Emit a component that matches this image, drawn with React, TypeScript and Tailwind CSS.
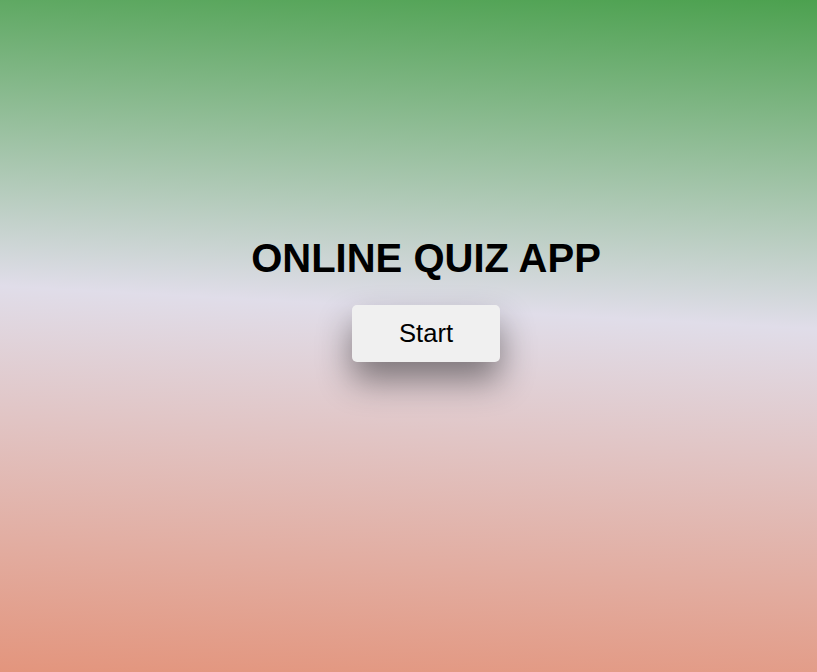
export default function App() {
  return (
    <div
      className="min-h-screen w-full flex flex-col items-center pt-[235px] pl-[35px] bg-[linear-gradient(183deg,#4ca14f_0%,#e0dde9_46%,#e3957d_100%)]"
      style={{ fontFamily: '"Liberation Sans", Arial, sans-serif', height: 672 }}
    >
      <h1 className="text-[40px] leading-[46px] font-bold text-black">ONLINE QUIZ APP</h1>
      <button className="mt-[24px] w-[148px] h-[57px] rounded-[5px] bg-[#f0f0f0] text-[25.6px] text-black shadow-[0_18px_34px_rgba(0,0,0,0.45)]">
        Start
      </button>
    </div>
  );
}
